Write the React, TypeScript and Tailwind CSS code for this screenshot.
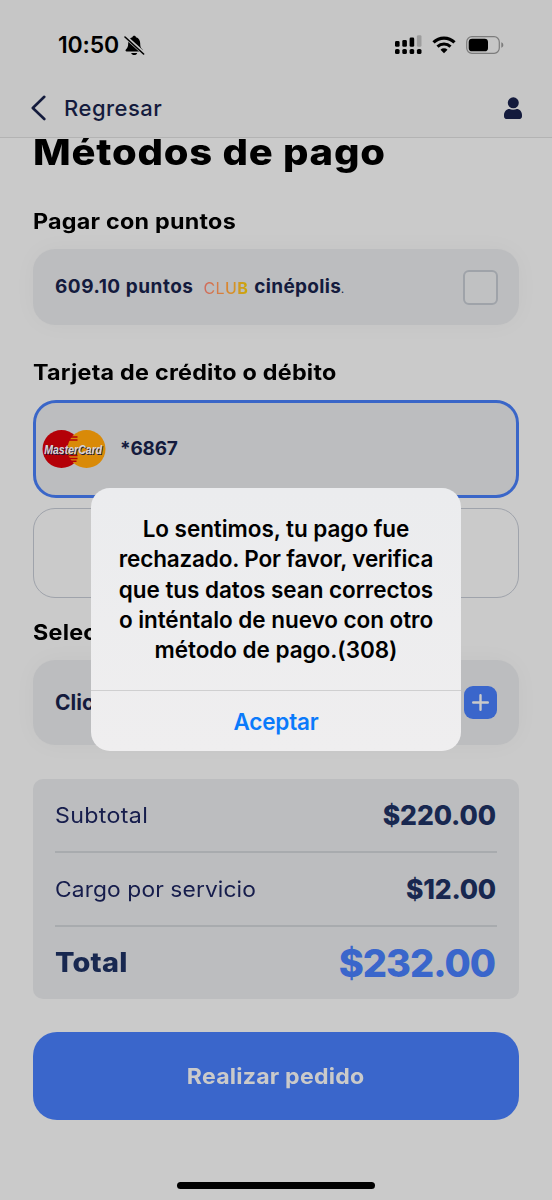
import React from "react";

const NAVY = "#141b3d";

function BellOffIcon() {
  return (
    <svg width="21" height="21" viewBox="0 0 21 21" className="block">
      <path
        d="M10.2 0.8c.9 0 1.6.6 1.8 1.4 2.7.8 4.2 3 4.2 6 0 4 1 5 2.3 6.3.8.8.4 2-.8 2H2.7c-1.2 0-1.6-1.2-.8-2C3.2 13.2 4.2 12 4.2 8.2c0-3 1.5-5.2 4.2-6C8.6 1.400 9.3.8 10.2.8z"
        fill="#000"
      />
      <path d="M7.2 17.900h6c-.4 1.300-1.500 2.100-3 2.100s-2.600-.8-3-2.100z" fill="#000" />
      <path d="M1.600 1.800 20 18.600" stroke="#c6c6c6" strokeWidth="3.600" />
      <path d="M1 2 19.600 19" stroke="#000" strokeWidth="1.600" strokeLinecap="round" />
    </svg>
  );
}

function SignalIcon() {
  return (
    <svg width="27" height="20" viewBox="0 0 27 20" className="block">
      <rect x="0" y="6" width="4.600" height="5.800" rx="1.400" />
      <rect x="7.300" y="5" width="4.600" height="6.800" rx="1.400" />
      <rect x="14.600" y="2.500" width="4.600" height="9.300" rx="1.400" />
      <rect x="21.900" y="0.200" width="4.600" height="11.600" rx="1.400" fill="#9d9d9d" />
      {[0, 7.3, 14.6, 21.9].map((x) => (
        <rect key={x} x={x} y="14" width="4.600" height="5" rx="1.600" />
      ))}
    </svg>
  );
}

function WifiIcon() {
  return (
    <svg width="24" height="18" viewBox="0 0 24 18" className="block" fill="none" stroke="#000">
      <path d="M1.500 6.400a15 15 0 0 1 21 0" strokeWidth="3.200" />
      <path d="M5.500 10.600a9.300 9.300 0 0 1 13 0" strokeWidth="3" />
      <path d="M12 17.300 8.500 13.700a5 5 0 0 1 7 0z" fill="#000" stroke="none" />
    </svg>
  );
}

function BatteryIcon() {
  return (
    <svg width="38" height="18" viewBox="0 0 38 18" className="block">
      <rect x="0.700" y="0.700" width="32.600" height="16.600" rx="5.200" fill="none" stroke="#7c7c7c" strokeWidth="1.200" />
      <rect x="2.700" y="2.700" width="19.300" height="12.600" rx="3.400" />
      <path d="M35.300 6.200c1.300.5 2 1.500 2 2.800s-.7 2.300-2 2.800z" fill="#7c7c7c" />
    </svg>
  );
}

function PersonIcon() {
  return (
    <svg width="18" height="23" viewBox="0 0 18 23" className="block" fill={NAVY}>
      <circle cx="9.300" cy="5.800" r="5.500" />
      <path d="M5.500 12c1 .4 2.200.7 3.600.7s2.700-.3 3.600-.7c3.100 0 5.300 2.700 5.300 6v1.200c0 1.800-1.200 2.900-3 2.900H3c-1.800 0-3-1.100-3-2.900V18c0-3.300 2.400-6 5.500-6z" />
    </svg>
  );
}

function MasterCardLogo() {
  return (
    <svg width="64" height="40" viewBox="0 0 64 40" className="block">
      <circle cx="19.500" cy="20" r="19" fill="#b40008" />
      <circle cx="44.500" cy="20" r="19" fill="#d98a08" />
      <path d="M28.500 8h7M27 11h8.500M26.500 26.500h9M27 29.500h8.500M28.500 32.200h6" stroke="#b40008" strokeWidth="1.500" />
      <text
        x="2.200"
        y="24.600"
        textLength="58"
        lengthAdjust="spacingAndGlyphs"
        className="fill-[#d6d6da] font-['Liberation_Sans',sans-serif] text-[12.500px] font-bold italic [text-shadow:1px_1px_0_#1c1d3c]"
      >
        MasterCard
      </text>
    </svg>
  );
}

function SectionTitle({ children }: { children: React.ReactNode }) {
  return (
    <h2 className="flex h-7 origin-left scale-x-[1.11] items-center whitespace-nowrap pt-px text-[21px] font-bold tracking-[0.22px] text-black">
      {children}
    </h2>
  );
}

export default function App() {
  return (
    <div className="relative flex h-[1200px] w-[552px] flex-col overflow-hidden bg-[#cacaca] font-['Inter',sans-serif] text-[#141b3d]">
      <header className="z-10 h-[138px] shrink-0 border-b border-[#b3b3b3] bg-[#c6c6c6]">
        <div className="flex h-[90px] items-center justify-between pl-[58px] pr-12 text-black">
          <div className="flex items-center gap-[5px]">
            <span className="text-[23px] font-semibold leading-none tracking-[-0.2px]">10:50</span>
            <BellOffIcon />
          </div>
          <div className="flex items-center gap-2.5">
            <SignalIcon />
            <WifiIcon />
            <BatteryIcon />
          </div>
        </div>
        <div className="flex h-9 items-center justify-between pl-[31px] pr-[30px]">
          <div className="flex items-center gap-[17px]">
            <svg width="16" height="26" viewBox="0 0 16 26" className="block" fill="none" stroke={NAVY} strokeWidth="2.600" strokeLinecap="round" strokeLinejoin="round">
              <path d="M13.300 1.800 1.800 13l11.500 11" />
            </svg>
            <span className="text-[22px] font-medium leading-none tracking-[0.5px]">Regresar</span>
          </div>
          <PersonIcon />
        </div>
      </header>

      <main className="flex flex-col px-[33px]">
        <h1 className="-mt-[7px] flex h-10 origin-left scale-x-[1.11] items-center whitespace-nowrap pt-px text-[36px] font-extrabold tracking-[0.7px] text-black">
          Métodos de pago
        </h1>

        <div className="mt-9">
          <SectionTitle>Pagar con puntos</SectionTitle>
        </div>
        <section className="mt-3.5 flex h-[76px] items-center justify-between rounded-[22px] bg-[#bcbdbf] pl-[22px] pr-[21px] shadow-[0_0_24px_rgba(0,0,0,0.03)]">
          <div className="flex items-center">
            <span className="pt-px text-[19px] font-bold tracking-[0.52px]">609.10 puntos</span>
            <span className="ml-2.5 bg-gradient-to-r from-[#cf6a5c] via-[#d98431] to-[#c9a800] bg-clip-text pt-0.5 text-[16px] tracking-[0.4px] text-transparent">
              <span>CL</span>
              <span className="font-medium">U</span>
              <span className="font-bold">B</span>
            </span>
            <span className="ml-1.5 text-[19px] font-bold tracking-[0.3px]">
              cinépolis<span className="text-[9px]">.</span>
            </span>
          </div>
          <span className="size-[35px] rounded-[6px] border-2 border-[#9fa3a9] bg-[#c0c1c2]" />
        </section>

        <div className="mt-[33px]">
          <SectionTitle>Tarjeta de crédito o débito</SectionTitle>
        </div>
        <section className="mt-3.5 flex h-[98px] items-center rounded-[23px] border-[3px] border-[#3a66c8] bg-[#bcbdbf] pl-1.5">
          <MasterCardLogo />
          <span className="ml-3.5 pt-px text-[19px] font-bold tracking-[-0.2px]">*6867</span>
        </section>
        <section className="mt-2.5 h-[90px] rounded-[22px] border border-[#9fa3ab]" />

        <div className="mt-5">
          <SectionTitle>Selecciona</SectionTitle>
        </div>
        <section className="mt-3.5 flex h-[85px] items-center justify-between rounded-[22px] bg-[#bcbdbf] px-[22px] shadow-[0_0_24px_rgba(0,0,0,0.03)]">
          <span className="text-[21px] font-bold">Clic</span>
          <span className="flex size-[33px] items-center justify-center rounded-[9px] bg-[#3a66cb]">
            <svg width="17" height="17" viewBox="0 0 17 17" stroke="#cacaca" strokeWidth="2.400" strokeLinecap="round">
              <path d="M8.500 1.200v14.600M1.200 8.500h14.600" />
            </svg>
          </span>
        </section>

        <section className="mt-[34px] flex h-[220px] flex-col rounded-[10px] bg-[#bcbdbf] px-[22px] text-[#182850]">
          <div className="flex h-[74px] items-center justify-between border-b-2 border-[#a8abae] text-[#161d4c]">
            <span className="origin-left scale-x-[1.08] text-[21.500px] tracking-[0.3px]">Subtotal</span>
            <span className="pr-px pt-px text-[26.500px] font-extrabold tracking-[-0.1px] text-[#182850]">$220.00</span>
          </div>
          <div className="flex h-[74px] items-center justify-between border-b-2 border-[#a8abae] text-[#161d4c]">
            <span className="origin-left scale-x-[1.06] text-[21.500px] tracking-[0.1px]">Cargo por servicio</span>
            <span className="pr-px pt-px text-[26.500px] font-extrabold tracking-[-0.2px] text-[#182850]">$12.00</span>
          </div>
          <div className="flex h-[72px] items-center justify-between">
            <span className="origin-left scale-x-[1.07] pt-px text-[27px] font-extrabold tracking-[0.2px]">Total</span>
            <span className="pr-0.5 text-[38px] font-extrabold tracking-[-1px] text-[#3a66cb]">$232.00</span>
          </div>
        </section>

        <button className="mt-[33px] flex h-[88px] items-center justify-center rounded-[24px] bg-[#3a66cb] text-[21.500px] font-bold tracking-[0.2px] text-[#cacaca]">
          <span className="scale-x-[1.075]">Realizar pedido</span>
        </button>
      </main>

      <div className="mt-[62px] h-[7px] w-[198px] shrink-0 self-center rounded-full bg-black" />

      <div role="alertdialog" className="absolute left-[91px] top-[488px] z-20 flex h-[263px] w-[370px] flex-col rounded-[19px] bg-gradient-to-b from-[#ebecee] to-[#efeeef] text-black">
        <div className="flex h-[203px] flex-col items-center border-b border-[#cfcfd0] pt-[26px] text-[22.500px] font-semibold leading-[30.300px] tracking-[-0.05px]">
          <span>Lo sentimos, tu pago fue</span>
          <span className="tracking-[-0.17px]">rechazado. Por favor, verifica</span>
          <span>que tus datos sean correctos</span>
          <span>o inténtalo de nuevo con otro</span>
          <span>método de pago.(308)</span>
        </div>
        <button className="flex flex-1 items-center justify-center pt-0.5 text-[22.500px] font-semibold tracking-[-0.2px] text-[#0a7afb]">Aceptar</button>
      </div>
    </div>
  );
}
